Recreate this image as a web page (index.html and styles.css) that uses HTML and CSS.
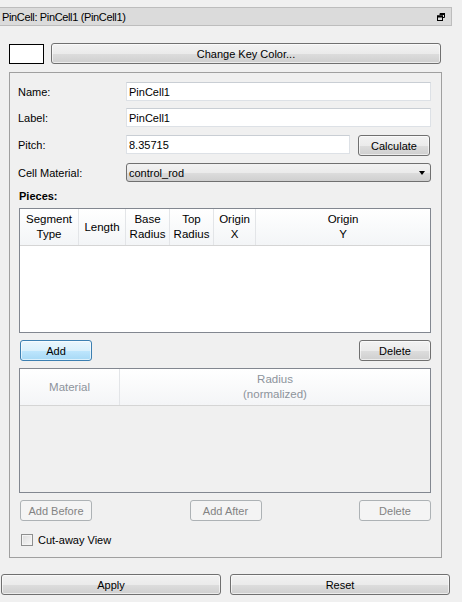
FILE: index.html
```html
<!DOCTYPE html>
<html>
<head>
<meta charset="utf-8">
<link rel="stylesheet" href="styles.css">
</head>
<body>
<div class="titlebar">
  <span class="title">PinCell: PinCell1 (PinCell1)</span>
  <svg class="float-icon" width="8" height="8" viewBox="0 0 8 8"><path d="M3 0.5H7.5V4.5H6M3 0.5V2" fill="none" stroke="#000" stroke-width="1"/><rect x="0.5" y="3" width="5" height="4.5" fill="none" stroke="#000" stroke-width="1"/><line x1="0" y1="3.5" x2="6" y2="3.5" stroke="#000" stroke-width="2"/><line x1="3" y1="1" x2="8" y2="1" stroke="#000" stroke-width="2"/></svg>
</div>
<div class="keyrow">
  <div class="swatch"></div>
  <button class="btn key-btn">Change Key Color...</button>
</div>
<div class="group">
  <div class="form-row">
    <label class="lbl">Name:</label>
    <div class="input">PinCell1</div>
  </div>
  <div class="form-row row-label">
    <label class="lbl">Label:</label>
    <div class="input">PinCell1</div>
  </div>
  <div class="form-row row-pitch">
    <label class="lbl">Pitch:</label>
    <div class="input input-pitch">8.35715</div>
    <button class="btn calc-btn">Calculate</button>
  </div>
  <div class="form-row">
    <label class="lbl">Cell Material:</label>
    <div class="combo">control_rod<span class="arrow"></span></div>
  </div>
  <div class="section-label">Pieces:</div>
  <div class="table">
    <div class="thead">
      <div class="th c1">Segment<br>Type</div>
      <div class="th c2">Length</div>
      <div class="th c3">Base<br>Radius</div>
      <div class="th c4">Top<br>Radius</div>
      <div class="th c5">Origin<br>X</div>
      <div class="th c6">Origin<br>Y</div>
    </div>
  </div>
  <div class="btn-row">
    <button class="btn btn-sm btn-default">Add</button>
    <button class="btn btn-sm">Delete</button>
  </div>
  <div class="table table-disabled">
    <div class="thead">
      <div class="th m1">Material</div>
      <div class="th m2">Radius<br>(normalized)</div>
    </div>
  </div>
  <div class="btn-row btn-row3">
    <button class="btn btn-sm disabled">Add Before</button>
    <button class="btn btn-sm disabled">Add After</button>
    <button class="btn btn-sm disabled">Delete</button>
  </div>
  <div class="check-row">
    <span class="checkbox"></span>
    <span>Cut-away View</span>
  </div>
</div>
<div class="bottom-row">
  <button class="btn big-btn">Apply</button>
  <button class="btn big-btn">Reset</button>
</div>
</body>
</html>
```

FILE: styles.css
```css
* { box-sizing: border-box; }
html, body {
  margin: 0;
  padding: 0;
  background: #f0f0f0;
  font-family: "Liberation Sans", Arial, sans-serif;
  font-size: 11px;
  color: #000;
  width: 462px;
  height: 602px;
  overflow: hidden;
}
body { padding-top: 7px; }

.titlebar {
  width: 452px;
  height: 19px;
  background: #dbdbdb;
  border: 1px solid #bdbdbd;
  border-left: none;
  display: flex;
  align-items: center;
  justify-content: space-between;
  padding: 0 6px 0 2px;
  font-size: 11px;
}
.title { letter-spacing: -0.35px; }
.float-icon { display: block; }

.keyrow {
  display: flex;
  align-items: flex-start;
  margin-top: 17px;
  padding-left: 9px;
}
.swatch {
  width: 35px;
  height: 20px;
  margin-top: 1px;
  background: #fff;
  border: 1px solid #000;
}
.btn {
  font-family: inherit;
  font-size: 11px;
  color: #000;
  border: 1px solid #707070;
  border-radius: 3px;
  background: linear-gradient(#f2f2f2 0%, #ebebeb 50%, #dddddd 51%, #cfcfcf 100%);
  padding: 0;
  margin: 0;
  display: flex;
  align-items: center;
  justify-content: center;
  box-shadow: inset 0 0 0 1px rgba(255,255,255,0.6);
}
.key-btn {
  width: 390px;
  height: 21px;
  margin-left: 7px;
}

.group {
  margin-top: 8px;
  margin-left: 9px;
  width: 433px;
  height: 486px;
  border: 1px solid #a0a0a0;
  padding: 9px 10px 0 9px;
  display: flex;
  flex-direction: column;
}
.form-row {
  display: flex;
  align-items: flex-start;
  height: 19px;
  margin-bottom: 7px;
}
.form-row.row-label { margin-bottom: 8px; }
.form-row.row-pitch { height: 21px; }
.lbl {
  width: 108px;
  margin-left: -1px;
  line-height: 20px;
}
.input {
  flex: 1;
  height: 19px;
  background: #fff;
  border: 1px solid #dde1e6;
  border-top-color: #c9ced4;
  line-height: 18px;
  padding-left: 2px;
}
.input-pitch { flex: none; width: 224px; }
.calc-btn {
  width: 72px;
  height: 21px;
  margin-left: 8px;
}
.combo {
  flex: 1;
  height: 19px;
  border: 1px solid #707070;
  border-radius: 3px;
  background: linear-gradient(#f2f2f2 0%, #ebebeb 50%, #dddddd 51%, #cfcfcf 100%);
  line-height: 18px;
  padding-left: 2px;
  position: relative;
}
.arrow {
  position: absolute;
  right: 5px;
  top: 7px;
  width: 0;
  height: 0;
  border-left: 3.5px solid transparent;
  border-right: 3.5px solid transparent;
  border-top: 4px solid #000;
}
.section-label {
  font-weight: bold;
  height: 18px;
  line-height: 13px;
  margin-top: 1px;
}
.table {
  width: 412px;
  height: 125px;
  border: 1px solid #828790;
  background: #fff;
}
.thead {
  display: flex;
  height: 37px;
  border-bottom: 1px solid #d5d5d5;
  background: linear-gradient(#ffffff, #f3f5f7);
}
.th {
  border-right: 1px solid #e3e5e8;
  display: flex;
  align-items: center;
  justify-content: center;
  text-align: center;
  line-height: 15px;
  font-size: 11.5px;
}
.c1 { width: 59px; }
.c2 { width: 47px; }
.c3 { width: 44px; }
.c4 { width: 44px; }
.c5 { width: 42px; }
.c6 { flex: 1; border-right: none; }
.table-disabled { background: #f0f0f0; }
.table-disabled .thead { background: linear-gradient(#ffffff, #f4f5f7); }
.table-disabled .th { color: #8d939b; }
.m1 { width: 100px; }
.m2 { flex: 1; border-right: none; }

.btn-row {
  display: flex;
  justify-content: space-between;
  margin: 7px 0 7px 1px;
  height: 21px;
}
.btn-sm { width: 72px; height: 21px; }
.btn-default {
  border-color: #3c7fb1;
  background: linear-gradient(#eaf6fd 0%, #d9f0fc 50%, #bee6fd 51%, #a7d9f5 100%);
}
.btn-row3 { margin-bottom: 0; }
.btn.disabled {
  color: #838383;
  border-color: #adb2b5;
  background: #f4f4f4;
  box-shadow: none;
}
.check-row {
  display: flex;
  align-items: center;
  margin-top: 12px;
  margin-left: 2px;
  height: 13px;
}
.checkbox {
  width: 12px;
  height: 12px;
  border: 1px solid #8e8f8f;
  background: linear-gradient(135deg, #dcdcdc, #f8f8f8);
  box-shadow: inset 0 0 0 1px #f4f4f4;
  margin-right: 5px;
}

.bottom-row {
  display: flex;
  margin-top: 16px;
  padding-left: 1px;
}
.big-btn { width: 220px; height: 21px; }
.big-btn + .big-btn { margin-left: 9px; }
```
